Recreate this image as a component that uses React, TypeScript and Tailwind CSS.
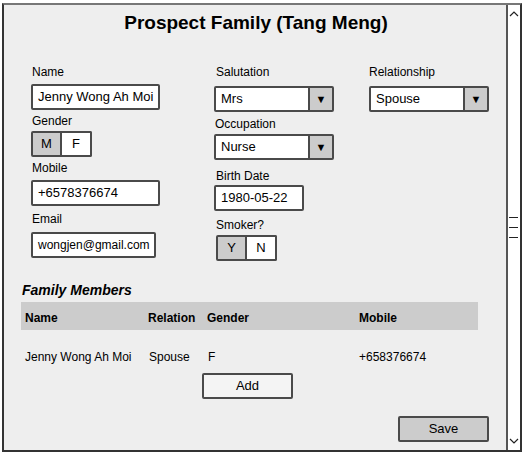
import React from 'react';

function Label({ text, className = '' }: { text: string; className?: string }) {
  return <div className={`h-4 leading-4 text-[12px] text-black ${className}`}>{text}</div>;
}

function TextBox({ value, w, className = '' }: { value: string; w: string; className?: string }) {
  return (
    <div className={`h-[26px] ${w} bg-white border-2 border-[#4a4a4a] rounded-[2px] flex items-center pl-[5px] text-black ${className}`}>
      {value}
    </div>
  );
}

function Select({ value, className = '' }: { value: string; className?: string }) {
  return (
    <div className={`h-[26px] w-[120px] bg-white border-2 border-[#4a4a4a] rounded-[2px] flex ${className}`}>
      <div className="flex-1 flex items-center pl-[5px] text-[13px] text-black">{value}</div>
      <div className="w-[24px] bg-[#cccccc] border-l-2 border-[#4a4a4a] flex items-center justify-center text-[11px] text-black">▼</div>
    </div>
  );
}

function Toggle({ a, b, className = '' }: { a: string; b: string; className?: string }) {
  return (
    <div className={`flex h-[26px] ${className}`}>
      <div className="w-[31px] bg-[#cccccc] border-2 border-[#4a4a4a] rounded-l-[2px] flex items-center justify-center text-[13px]">{a}</div>
      <div className="w-[30px] bg-white border-2 border-l-0 border-[#4a4a4a] rounded-r-[2px] flex items-center justify-center text-[13px]">{b}</div>
    </div>
  );
}

export default function App() {
  return (
    <div className="w-[525px] h-[455px] bg-white pl-[2px] pt-[3px] font-['Liberation_Sans',Arial,sans-serif] text-black">
      <div className="w-[520px] h-[449px] flex border-2 border-[#333] border-t-[#777]">
        {/* Main panel */}
        <div className="flex-1 bg-[#eeeeee] border-r-2 border-[#555] flex flex-col">
          <div className="pt-[6px] h-[30px] leading-[24px] text-center text-[19px] font-bold pl-[2px]">
            Prospect Family (Tang Meng)
          </div>

          {/* Form */}
          <div className="flex mt-[29px] pl-[27px]">
            <div className="w-[183px] flex flex-col">
              <Label text="Name" className="pl-[1px]" />
              <TextBox value="Jenny Wong Ah Moi" w="w-[129px]" className="mt-[4px] text-[13px]" />
              <Label text="Gender" className="mt-[3px] pl-[1px]" />
              <Toggle a="M" b="F" className="mt-[2px]" />
              <Label text="Mobile" className="mt-[3px] pl-[1px]" />
              <TextBox value="+6578376674" w="w-[129px]" className="mt-[4px] text-[13px]" />
              <Label text="Email" className="mt-[5px] pl-[1px]" />
              <TextBox value="wongjen@gmail.com" w="w-[125px]" className="mt-[5px] text-[12px]" />
            </div>
            <div className="w-[155px] flex flex-col">
              <Label text="Salutation" className="pl-[2px]" />
              <Select value="Mrs" className="mt-[6px]" />
              <Label text="Occupation" className="mt-[4px] pl-[1px]" />
              <Select value="Nurse" className="mt-[2px]" />
              <Label text="Birth Date" className="mt-[8px] pl-[2px]" />
              <TextBox value="1980-05-22" w="w-[90px]" className="mt-[1px] text-[13px]" />
              <Label text="Smoker?" className="mt-[6px] pl-[2px]" />
              <Toggle a="Y" b="N" className="mt-[2px] ml-[2px]" />
            </div>
            <div className="flex flex-col">
              <Label text="Relationship" />
              <Select value="Spouse" className="mt-[6px]" />
            </div>
          </div>

          {/* Family members */}
          <div className="mt-[20px] pl-[18px] h-[18px] leading-[18px] text-[14px] font-bold italic">Family Members</div>
          <div className="ml-[17px] w-[457px] h-[28px] mt-[3px] bg-[#cccccc] grid grid-cols-[127px_59px_152px_1fr] text-[12px] font-bold items-end pb-[3px]">
            <div className="pl-[4px]">Name</div>
            <div>Relation</div>
            <div>Gender</div>
            <div>Mobile</div>
          </div>
          <div className="ml-[17px] w-[457px] mt-[19px] grid grid-cols-[127px_59px_152px_1fr] text-[12px] leading-4">
            <div className="pl-[4px]">Jenny Wong Ah Moi</div>
            <div className="pl-[1px]">Spouse</div>
            <div className="pl-[1px]">F</div>
            <div>+658376674</div>
          </div>
          <div className="ml-[198px] mt-[8px] w-[91px] h-[26px] bg-[#f4f4f4] border-2 border-[#4a4a4a] rounded-[2px] flex items-center justify-center text-[13px]">
            Add
          </div>
          <div className="ml-[394px] mt-[17px] w-[91px] h-[26px] bg-[#cccccc] border-2 border-[#4a4a4a] rounded-[2px] flex items-center justify-center text-[13px]">
            Save
          </div>
        </div>

        {/* Scrollbar */}
        <div className="w-[12px] bg-white flex flex-col items-center justify-between py-[5px]">
          <svg width="10" height="7" viewBox="0 0 10 7">
            <path d="M1 6 L5 2 L9 6" fill="none" stroke="#222" strokeWidth="1.2" />
          </svg>
          <div className="flex flex-col gap-[9px] w-full pl-[1px] pr-[2px] mt-[0px]">
            <div className="h-px bg-[#222]" />
            <div className="h-px bg-[#222]" />
            <div className="h-px bg-[#222]" />
          </div>
          <svg width="10" height="7" viewBox="0 0 10 7">
            <path d="M1 1 L5 5 L9 1" fill="none" stroke="#222" strokeWidth="1.2" />
          </svg>
        </div>
      </div>
    </div>
  );
}
